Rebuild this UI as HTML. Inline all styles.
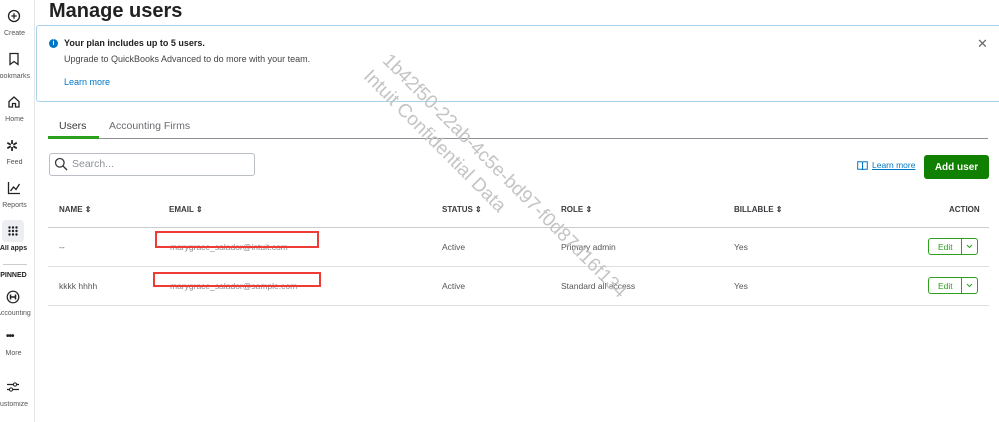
<!DOCTYPE html>
<html><head><style>
*{margin:0;padding:0;box-sizing:border-box}
body{width:999px;height:422px;overflow:hidden;background:#fff;font-family:"Liberation Sans",sans-serif;color:#393a3d;position:relative}
.a{position:absolute}
.side{left:0;top:0;width:35px;height:422px;border-right:1px solid #e3e5e8}
.lbl{font-size:7px;color:#555;width:35px;text-align:center;white-space:nowrap;overflow:hidden}
.ic{left:6px;width:22px;text-align:center}
.th{font-size:8px;font-weight:bold;color:#393a3d;top:205px}
.td{font-size:8.5px;color:#555}
.hl{height:1px;background:#dcdfe3;left:48px;width:941px}
.edit{width:50px;height:17px;border:1px solid #2ca01c;border-radius:3px;left:928px}
.edit span{position:absolute;font-size:8.5px;color:#2ca01c}
.wm{color:#c4c4c4;font-size:19px;transform-origin:0 0;transform:rotate(45deg);white-space:nowrap}
</style></head><body>
<div class="a side"></div>
<svg class="a" style="left:7px;top:9px" width="14" height="14" viewBox="0 0 14 14"><circle cx="7" cy="7" r="5.5" fill="none" stroke="#222" stroke-width="1.3"/><path d="M7 4.3v5.4M4.3 7h5.4" stroke="#222" stroke-width="1.3"/></svg>
<div class="a lbl" style="top:30px;left:-3px">Create</div>
<svg class="a" style="left:8px;top:52px" width="12" height="14" viewBox="0 0 12 14"><path d="M2 1.5h8v11l-4-3-4 3z" fill="none" stroke="#222" stroke-width="1.3"/></svg>
<div class="a lbl" style="top:73px;left:-5px">Bookmarks</div>
<svg class="a" style="left:7px;top:95px" width="14" height="14" viewBox="0 0 14 14"><path d="M2 6.5L7 2l5 4.5V12H8.5V8.5h-3V12H2z" fill="none" stroke="#222" stroke-width="1.3"/></svg>
<div class="a lbl" style="top:116px;left:-3px">Home</div>
<div class="a ic" style="top:137px;left:1px;font-size:15px;color:#222">✲</div>
<div class="a lbl" style="top:159px;left:-3px">Feed</div>
<svg class="a" style="left:7px;top:181px" width="14" height="14" viewBox="0 0 14 14"><path d="M1.5 1v11.5H13M3.5 10l3-4 2.5 2.5L12.5 3" fill="none" stroke="#222" stroke-width="1.3"/></svg>
<div class="a lbl" style="top:202px;left:-3px">Reports</div>
<div class="a" style="left:2px;top:220px;width:22px;height:22px;background:#eceef1;border-radius:4px"></div>
<svg class="a" style="left:8px;top:226px" width="10" height="10" viewBox="0 0 10 10" fill="#222"><circle cx="1.5" cy="1.5" r="1.2"/><circle cx="5" cy="1.5" r="1.2"/><circle cx="8.5" cy="1.5" r="1.2"/><circle cx="1.5" cy="5" r="1.2"/><circle cx="5" cy="5" r="1.2"/><circle cx="8.5" cy="5" r="1.2"/><circle cx="1.5" cy="8.5" r="1.2"/><circle cx="5" cy="8.5" r="1.2"/><circle cx="8.5" cy="8.5" r="1.2"/></svg>
<div class="a lbl" style="top:245px;left:-4px;font-weight:bold;color:#222">All apps</div>
<div class="a" style="left:3px;top:264px;width:24px;height:1px;background:#ccc"></div>
<div class="a lbl" style="top:272px;left:-4px;font-weight:bold;color:#222">PINNED</div>
<svg class="a" style="left:6px;top:290px" width="14" height="14" viewBox="0 0 14 14"><circle cx="7" cy="7" r="5.8" fill="none" stroke="#222" stroke-width="1.2"/><path d="M4.5 4.5v5M9.5 4.5v5M4.5 7h5" stroke="#222" stroke-width="1.5"/></svg>
<div class="a lbl" style="top:310px;left:-4px">Accounting</div>
<div class="a" style="left:6px;top:331px;font-size:10px;font-weight:bold;color:#222;letter-spacing:-1px">•••</div>
<div class="a lbl" style="top:350px;left:-4px">More</div>
<svg class="a" style="left:6px;top:381px" width="14" height="12" viewBox="0 0 14 12"><path d="M1 3.5h12M1 8.5h12" stroke="#222" stroke-width="1.2"/><circle cx="9" cy="3.5" r="1.6" fill="#fff" stroke="#222"/><circle cx="5" cy="8.5" r="1.6" fill="#fff" stroke="#222"/></svg>
<div class="a lbl" style="top:401px;left:-6px">Customize</div>

<div class="a" style="left:49px;top:0px;font-size:20px;font-weight:bold;color:#222">Manage users</div>
<div class="a" style="left:36px;top:25px;width:970px;height:77px;border:1.5px solid #a9d2e8;border-radius:3px"></div>
<div class="a" style="left:49px;top:39px;width:9px;height:9px;border-radius:50%;background:#0077c5;color:#fff;font-size:7px;font-weight:bold;text-align:center;line-height:9px">i</div>
<div class="a" style="left:64px;top:38px;font-size:9px;font-weight:bold;color:#222">Your plan includes up to 5 users.</div>
<div class="a" style="left:64px;top:54px;font-size:9px;color:#444">Upgrade to QuickBooks Advanced to do more with your team.</div>
<div class="a" style="left:64px;top:77px;font-size:9px;color:#0077c5">Learn more</div>
<div class="a" style="left:977px;top:36px;font-size:13px;color:#666">✕</div>

<div class="a" style="left:59px;top:120px;font-size:10.5px;color:#393a3d">Users</div>
<div class="a" style="left:109px;top:120px;font-size:10.5px;color:#6b6c72">Accounting Firms</div>
<div class="a" style="left:48px;top:138px;width:940px;height:1px;background:#8d9096"></div>
<div class="a" style="left:48px;top:136px;width:51px;height:3px;background:#2ca01c"></div>

<div class="a" style="left:49px;top:153px;width:206px;height:23px;border:1px solid #babec5;border-radius:3px"></div>
<svg class="a" style="left:54px;top:157px" width="14" height="14" viewBox="0 0 14 14"><circle cx="5.8" cy="5.8" r="4.3" fill="none" stroke="#393a3d" stroke-width="1.3"/><path d="M9 9l4 4" stroke="#393a3d" stroke-width="1.4"/></svg>
<div class="a" style="left:72px;top:158px;font-size:10.5px;color:#8d9096">Search...</div>

<svg class="a" style="left:857px;top:161px" width="11" height="9" viewBox="0 0 11 9"><path d="M0.7 0.7h4l0.8 0.8 0.8-0.8h4v7.6h-4l-0.8 0.5-0.8-0.5h-4zM5.5 1.5v7" fill="none" stroke="#0077c5" stroke-width="1"/></svg>
<div class="a" style="left:872px;top:160px;font-size:8.5px;color:#0077c5;text-decoration:underline">Learn more</div>
<div class="a" style="left:924px;top:155px;width:65px;height:24px;background:#108000;border-radius:3px;color:#fff;font-size:10px;font-weight:bold;display:flex;align-items:center;justify-content:center">Add user</div>

<div class="a th" style="left:59px">NAME ⇕</div>
<div class="a th" style="left:169px">EMAIL ⇕</div>
<div class="a th" style="left:442px">STATUS ⇕</div>
<div class="a th" style="left:561px">ROLE ⇕</div>
<div class="a th" style="left:734px">BILLABLE ⇕</div>
<div class="a th" style="left:949px">ACTION</div>
<div class="a hl" style="top:227px;background:#c9ccd1"></div>
<div class="a hl" style="top:266px"></div>
<div class="a hl" style="top:305px"></div>

<div class="a td" style="left:59px;top:242px">--</div>
<div class="a td" style="left:170px;top:242px;color:#888">marygrace_salador@intuit.com</div>
<div class="a" style="left:155px;top:231px;width:164px;height:17px;border:2px solid #ef3b36"></div>
<div class="a td" style="left:442px;top:242px">Active</div>
<div class="a td" style="left:561px;top:242px">Primary admin</div>
<div class="a td" style="left:734px;top:242px">Yes</div>
<div class="a edit" style="top:238px"><span style="left:9px;top:3px">Edit</span><div class="a" style="left:32px;top:0;width:1px;height:15px;background:#2ca01c"></div><svg class="a" style="left:37px;top:5px" width="7" height="5" viewBox="0 0 7 5"><path d="M1 1l2.5 2.5L6 1" fill="none" stroke="#2ca01c" stroke-width="1"/></svg></div>

<div class="a td" style="left:59px;top:281px">kkkk hhhh</div>
<div class="a td" style="left:170px;top:281px;color:#888">marygrace_salador@sample.com</div>
<div class="a" style="left:153px;top:272px;width:168px;height:15px;border:2px solid #ef3b36;background:transparent"></div>
<div class="a td" style="left:442px;top:281px">Active</div>
<div class="a td" style="left:561px;top:281px">Standard all access</div>
<div class="a td" style="left:734px;top:281px">Yes</div>
<div class="a edit" style="top:277px"><span style="left:9px;top:3px">Edit</span><div class="a" style="left:32px;top:0;width:1px;height:15px;background:#2ca01c"></div><svg class="a" style="left:37px;top:5px" width="7" height="5" viewBox="0 0 7 5"><path d="M1 1l2.5 2.5L6 1" fill="none" stroke="#2ca01c" stroke-width="1"/></svg></div>

<div class="a wm" style="left:393px;top:50px">1b42f50-22ab-4c5e-bd97-f0d87d16f134</div>
<div class="a wm" style="left:374px;top:66px">Intuit Confidential Data</div>
</body></html>
